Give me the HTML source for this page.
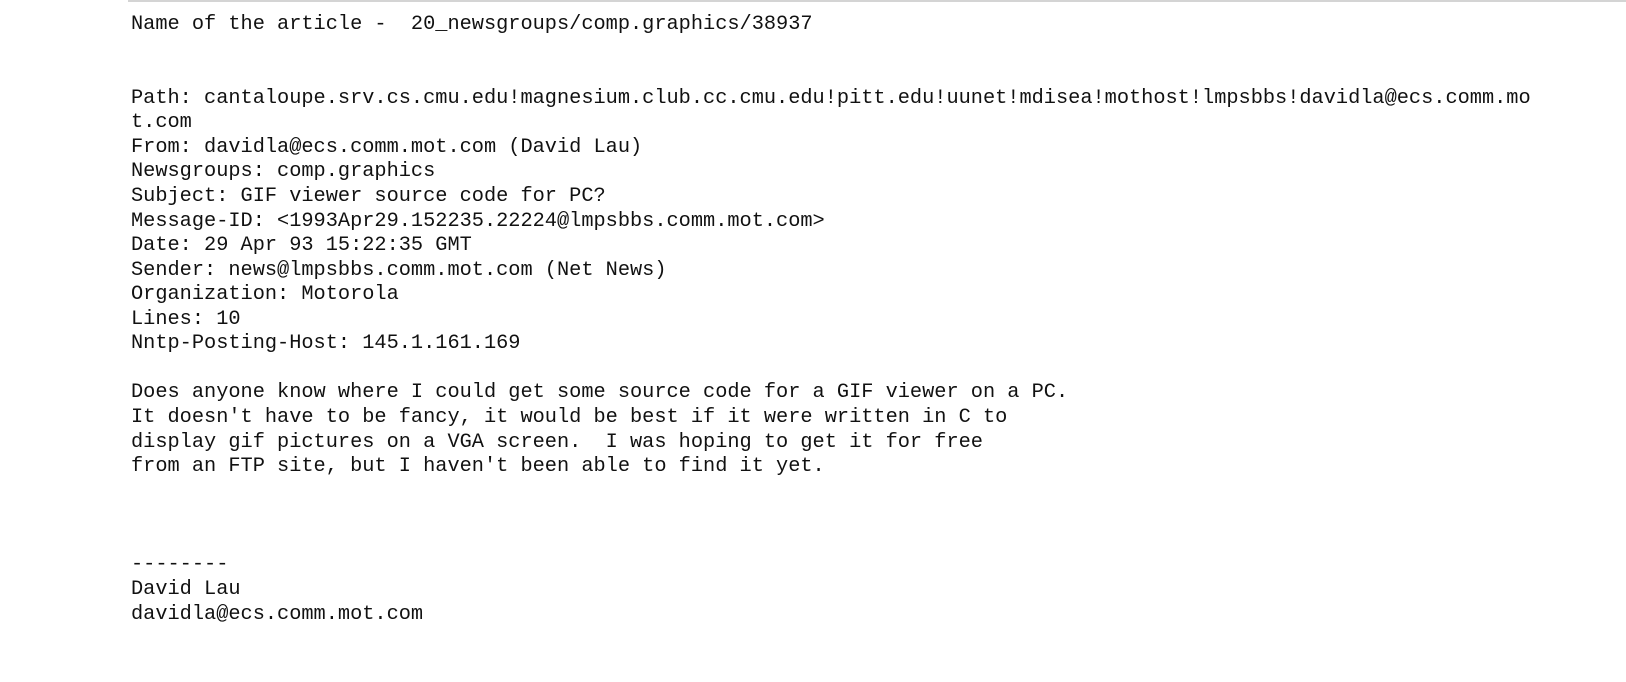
<!DOCTYPE html>
<html><head><meta charset="utf-8"><style>
html,body{margin:0;padding:0;background:#fff;width:1626px;height:682px;overflow:hidden}
.bar{position:absolute;left:128px;top:0;width:1498px;height:1px;border-top:2px solid #d4d4d4}
pre{position:absolute;left:131px;top:13px;margin:0;font-family:"Liberation Mono",monospace;font-size:20.3px;line-height:24.57px;color:#111}
</style></head><body>
<div class="bar"></div>
<pre>Name of the article -  20_newsgroups/comp.graphics/38937


Path: cantaloupe.srv.cs.cmu.edu!magnesium.club.cc.cmu.edu!pitt.edu!uunet!mdisea!mothost!lmpsbbs!davidla@ecs.comm.mo
t.com
From: davidla@ecs.comm.mot.com (David Lau)
Newsgroups: comp.graphics
Subject: GIF viewer source code for PC?
Message-ID: &lt;1993Apr29.152235.22224@lmpsbbs.comm.mot.com&gt;
Date: 29 Apr 93 15:22:35 GMT
Sender: news@lmpsbbs.comm.mot.com (Net News)
Organization: Motorola
Lines: 10
Nntp-Posting-Host: 145.1.161.169

Does anyone know where I could get some source code for a GIF viewer on a PC.
It doesn't have to be fancy, it would be best if it were written in C to
display gif pictures on a VGA screen.  I was hoping to get it for free
from an FTP site, but I haven't been able to find it yet.



--------
David Lau
davidla@ecs.comm.mot.com</pre>
</body></html>
